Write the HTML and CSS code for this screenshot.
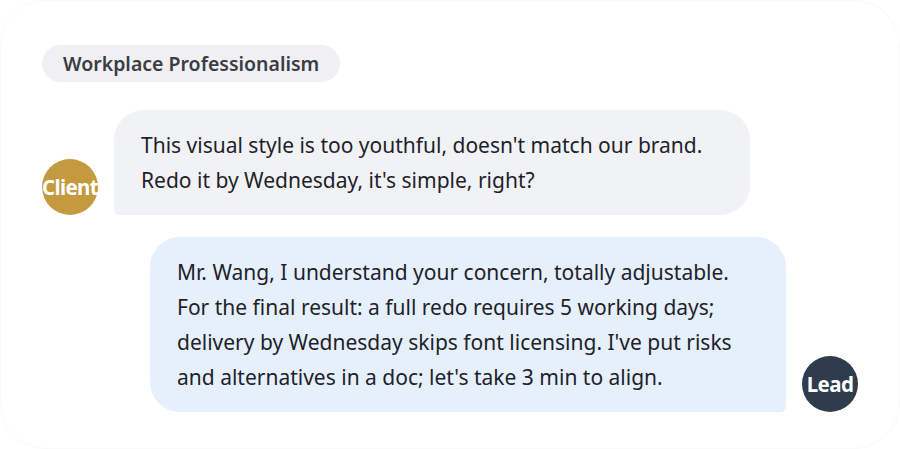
FILE: index.html
```html
<!DOCTYPE html>
<html>
<head>
<meta charset="utf-8">
<link rel="stylesheet" href="styles.css">
</head>
<body>
<div class="card">
  <div class="tag">Workplace Professionalism</div>
  <div class="row left">
    <div class="avatar client">Client</div>
    <div class="bubble gray">This visual style is too youthful, doesn't match our brand. Redo it by Wednesday, it's simple, right?</div>
  </div>
  <div class="row right">
    <div class="bubble blue">Mr. Wang, I understand your concern, totally adjustable. For the final result: a full redo requires 5 working days; delivery by Wednesday skips font licensing. I've put risks and alternatives in a doc; let's take 3 min to align.</div>
    <div class="avatar lead">Lead</div>
  </div>
</div>
</body>
</html>
```
FILE: styles.css
```css
html, body {
  margin: 0;
  padding: 0;
  background: #ffffff;
}
body {
  font-family: "Noto Sans", "Open Sans", sans-serif;
  color: #1f2229;
}
.card {
  box-sizing: border-box;
  width: 900px;
  height: 449px;
  border-radius: 46px;
  border: 1px solid #f9f9fa;
  background: #ffffff;
  padding: 44px 41px 0 41px;
  display: flex;
  flex-direction: column;
}
.tag {
  align-self: flex-start;
  background: #f0f0f3;
  color: #3b3c44;
  font-weight: 600;
  font-size: 19.5px;
  line-height: 37px;
  height: 37px;
  padding: 0 21px;
  border-radius: 19px;
  margin-bottom: 28px;
}
.row {
  display: flex;
  align-items: flex-end;
  gap: 16px;
}
.row.right {
  justify-content: flex-end;
  margin-top: 22px;
}
.avatar {
  width: 56px;
  height: 56px;
  border-radius: 50%;
  flex: none;
  display: flex;
  align-items: center;
  justify-content: center;
  color: #ffffff;
  font-weight: 700;
  font-size: 20.5px;
  letter-spacing: -0.6px;
  overflow: visible;
}
.avatar.client { background: #c39a3d; }
.avatar.lead { background: #2e3c4e; }
.bubble {
  box-sizing: border-box;
  width: 636px;
  padding: 18px 27px 17px 27px;
  font-size: 21px;
  line-height: 35px;
}
.bubble.gray {
  background: #f1f2f6;
  border-radius: 30px 30px 30px 5px;
}
.bubble.blue {
  background: #e6f0fd;
  border-radius: 30px 30px 5px 30px;
}
```
